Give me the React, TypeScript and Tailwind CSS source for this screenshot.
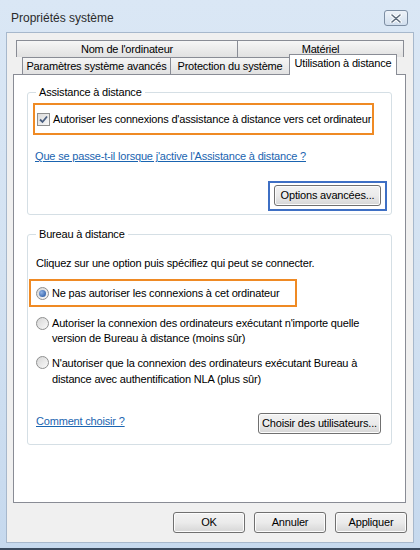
import React from 'react';

// Boîte de dialogue "Propriétés système" – onglet Utilisation à distance
const Checkbox = () => (
  <span className="w-[13px] h-[13px] border border-[#8e8f8f] bg-gradient-to-br from-[#dcdcdc] to-[#f7f7f7] flex items-center justify-center shrink-0">
    <svg width="9" height="9" viewBox="0 0 9 9">
      <path d="M1 4.5 L3.5 7 L8 1.5" fill="none" stroke="#4a5f80" strokeWidth="1.8" />
    </svg>
  </span>
);

const Radio = ({ checked }: { checked?: boolean }) => (
  <span className="w-[13px] h-[13px] rounded-full border border-[#8e8f8f] bg-gradient-to-br from-[#d6d6d6] to-[#fafafa] flex items-center justify-center shrink-0">
    {checked && (
      <span className="w-[7px] h-[7px] rounded-full bg-[radial-gradient(circle_at_35%_35%,#8fb3e6,#1c4f9c)]" />
    )}
  </span>
);

const Button = ({ children, className = '' }: { children: React.ReactNode; className?: string }) => (
  <button
    className={`h-[21px] border border-[#707070] rounded-[3px] bg-gradient-to-b from-[#f2f2f2] via-[#ebebeb] to-[#d6d6d6] text-black text-[11px] tracking-[-0.18px] leading-none whitespace-nowrap shadow-[inset_0_0_0_1px_#fcfcfc] ${className}`}
  >
    {children}
  </button>
);

const Tab = ({ children, className = '' }: { children: React.ReactNode; className?: string }) => (
  <div
    className={`h-[17px] border border-b-0 border-[#898c95] bg-gradient-to-b from-[#f6f6f6] to-[#e1e1e1] flex items-center justify-center whitespace-nowrap -ml-px first:ml-0 ${className}`}
  >
    {children}
  </div>
);

const App = () => {
  return (
    <div className="w-[420px] h-[550px] flex flex-col bg-gradient-to-b from-[#dae7f5] via-[#d3e2f2] to-[#c6d9ee] border-b-2 border-[#3a4a5e] font-['Liberation_Sans',Arial,sans-serif] text-[11px] tracking-[-0.18px] text-black whitespace-nowrap">
      {/* Barre de titre */}
      <div className="h-[32px] flex items-center justify-between pl-[11px] pr-[12px] shrink-0">
        <span className="text-[12px] tracking-normal text-[#2b2b2b] pt-[4px]">Propriétés système</span>
        <div className="w-[24px] h-[16px] mt-[4px] rounded-[3px] border border-[#7d8ea3] bg-gradient-to-b from-[#eef3f9] to-[#d2dfee] flex items-center justify-center">
          <svg width="12" height="9" viewBox="0 0 12 9">
            <path d="M2 1 L10 8 M10 1 L2 8" stroke="#ffffff" strokeWidth="3.4" strokeLinecap="round" />
            <path d="M2 1 L10 8 M10 1 L2 8" stroke="#5e6c7d" strokeWidth="1.6" strokeLinecap="round" />
          </svg>
        </div>
      </div>

      {/* Zone client */}
      <div className="flex-1 mx-[6px] mb-[5px] bg-[#f0f0f0] border border-[#a7b8cc] pt-[7px] pl-[6px] pr-[7px] flex flex-col">
        {/* Onglets */}
        <div className="flex flex-col">
          <div className="flex ml-[3px]">
            <Tab className="w-[222px]">Nom de l&apos;ordinateur</Tab>
            <Tab className="w-[167px]">Matériel</Tab>
          </div>
          <div className="flex items-end ml-[9px]">
            <Tab className="w-[149px]">Paramètres système avancés</Tab>
            <Tab className="w-[120px]">Protection du système</Tab>
            <div className="relative z-10 -ml-px -mt-[3px] w-[108px] h-[21px] -mb-px border border-b-0 border-[#898c95] bg-white flex items-center justify-center pb-[3px]">
              Utilisation à distance
            </div>
          </div>
        </div>

        {/* Panneau */}
        <div className="h-[429px] bg-white border border-[#898c95] px-[13px] pt-[10px]">
          {/* Assistance à distance */}
          <fieldset className="border border-[#d5dfe5] rounded-[3px] h-[130px] px-[4px]">
            <legend className="ml-[4px] px-[3px] leading-[14px]">Assistance à distance</legend>
            <div className="mt-[4px] ml-px w-[341px] h-[32px] border-2 border-[#ef8a24] flex items-center gap-[3px] pl-[2px]">
              <Checkbox />
              <span>Autoriser les connexions d&apos;assistance à distance vers cet ordinateur</span>
            </div>
            <div className="mt-[13px] ml-[3px]">
              <span className="text-[#1a64b0] underline decoration-[#1a64b0]">
                Que se passe-t-il lorsque j&apos;active l&apos;Assistance à distance ?
              </span>
            </div>
            <div className="flex justify-end mt-[16px]">
              <div className="w-[119px] h-[30px] border-2 border-[#3e6fc4] flex items-center justify-center">
                <Button className="w-[107px] h-[20px]">Options avancées...</Button>
              </div>
            </div>
          </fieldset>

          {/* Bureau à distance */}
          <fieldset className="mt-[12px] border border-[#d5dfe5] rounded-[3px] h-[218px] px-[1px]">
            <legend className="ml-[7px] px-[3px] leading-[14px]">Bureau à distance</legend>
            <p className="ml-[7px] mt-[15px] leading-[14px]">Cliquez sur une option puis spécifiez qui peut se connecter.</p>
            <div className="mt-[9px] w-[268px] h-[28px] border-2 border-[#ef8a24] flex items-center gap-[3px] pl-[5px]">
              <Radio checked />
              <span>Ne pas autoriser les connexions à cet ordinateur</span>
            </div>
            <div className="mt-[9px] flex gap-[3px] pl-[7px] leading-[15px]">
              <span className="mt-px"><Radio /></span>
              <span>
                Autoriser la connexion des ordinateurs exécutant n&apos;importe quelle
                <br />
                version de Bureau à distance (moins sûr)
              </span>
            </div>
            <div className="mt-[9px] flex gap-[3px] pl-[7px] leading-[16px]">
              <span className="mt-px"><Radio /></span>
              <span>
                N&apos;autoriser que la connexion des ordinateurs exécutant Bureau à
                <br />
                distance avec authentification NLA (plus sûr)
              </span>
            </div>
            <div className="mt-[26px] flex items-center justify-between pl-[7px] pr-[9px]">
              <span className="text-[#1a64b0] underline decoration-[#1a64b0] -mt-[4px]">Comment choisir ?</span>
              <Button className="w-[123px] h-[21px]">Choisir des utilisateurs...</Button>
            </div>
          </fieldset>
        </div>

        {/* Boutons du bas */}
        <div className="flex justify-end gap-[9px] mt-[9px] -mr-[1px]">
          <Button className="w-[72px]">OK</Button>
          <Button className="w-[72px]">Annuler</Button>
          <Button className="w-[72px]">Appliquer</Button>
        </div>
      </div>
    </div>
  );
};

export default App;
